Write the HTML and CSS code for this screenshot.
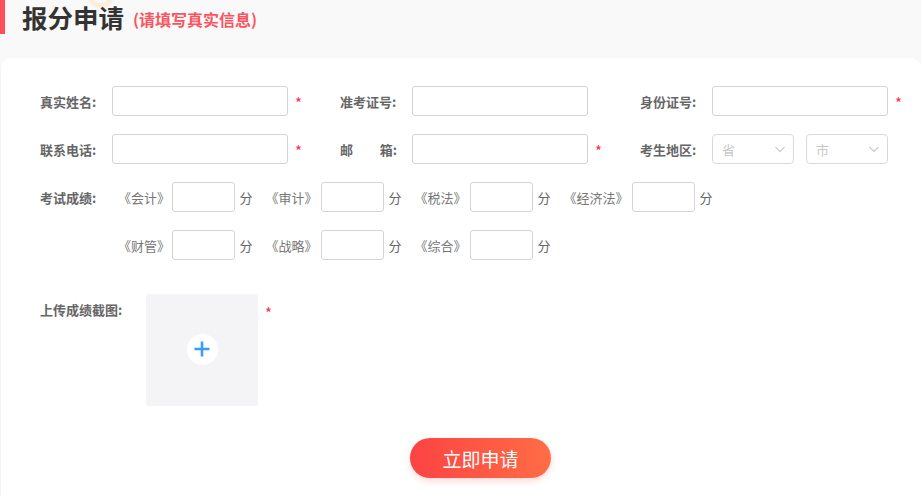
FILE: index.html
```html
<!DOCTYPE html>
<html lang="zh-CN">

<head>
  <meta charset="UTF-8">
  <meta name="viewport" content="width=device-width, initial-scale=1.0">
  <title>报分申请</title>

  <link rel="stylesheet" href="styles.css">
</head>

<body>
  <div class="title">
    <span class="deco"></span>
    <h2>报分申请</h2>
    <span class="tip">(请填写真实信息)</span>
  </div>
  <div class="card">
    <div class="row">
      <div class="field">
        <label>真实姓名:</label>
        <input class="input" type="text">
        <span class="star">*</span>
      </div>
      <div class="field">
        <label>准考证号:</label>
        <input class="input" type="text">
      </div>
      <div class="field">
        <label>身份证号:</label>
        <input class="input" type="text">
        <span class="star">*</span>
      </div>
    </div>
    <div class="row">
      <div class="field">
        <label>联系电话:</label>
        <input class="input" type="text">
        <span class="star">*</span>
      </div>
      <div class="field">
        <label class="spread"><span>邮</span><span>箱:</span></label>
        <input class="input" type="text">
        <span class="star">*</span>
      </div>
      <div class="field">
        <label>考生地区:</label>
        <div class="selects">
          <div class="select">省
            <svg viewBox="0 0 10 7" width="10" height="7"><path d="M.5 1l4.500 4.500L9.500 1" /></svg>
          </div>
          <div class="select">市
            <svg viewBox="0 0 10 7" width="10" height="7"><path d="M.5 1l4.500 4.500L9.500 1" /></svg>
          </div>
        </div>
      </div>
    </div>
    <div class="row scores">
      <label>考试成绩:</label>
      <div class="subject w1">《会计》</div><input class="input score" type="text"><span class="unit">分</span>
      <div class="subject w2">《审计》</div><input class="input score" type="text"><span class="unit">分</span>
      <div class="subject w2">《税法》</div><input class="input score" type="text"><span class="unit">分</span>
      <div class="subject w3">《经济法》</div><input class="input score" type="text"><span class="unit">分</span>
    </div>
    <div class="row scores">
      <label></label>
      <div class="subject w1">《财管》</div><input class="input score" type="text"><span class="unit">分</span>
      <div class="subject w2">《战略》</div><input class="input score" type="text"><span class="unit">分</span>
      <div class="subject w2">《综合》</div><input class="input score" type="text"><span class="unit">分</span>
    </div>
    <div class="upload-row">
      <label>上传成绩截图:</label>
      <div class="upload">
        <span class="plus">
          <svg viewBox="0 0 16 16" width="16" height="16"><path d="M8 .5v15M.5 8h15" /></svg>
        </span>
      </div>
      <span class="star">*</span>
    </div>
    <div class="submit-row">
      <button class="submit">立即申请</button>
    </div>
  </div>
</body>

</html>
```

FILE: styles.css
```css
* {
  box-sizing: border-box;
}

html,
body {
  height: 100%;
}

body {
  margin: 0;
  overflow: hidden;
  background-color: #f9f9f9;
  color: #666;
  font-family: "Noto Sans CJK SC", "Liberation Sans", sans-serif;
  font-size: 13px;
}

.title {
  position: relative;
  display: flex;
  align-items: center;
  height: 34px;
  border-left: 5px solid #ff4d5b;
  padding-left: 17px;
}

/* faint arc peeking out behind the heading */
.title .deco {
  position: absolute;
  top: -8px;
  left: 83px;
  width: 26px;
  height: 16px;
  border: 5px solid #fdeedd;
  border-top: none;
  border-radius: 0 0 12px 12px;
}

.title h2 {
  position: relative;
  margin: 0;
  color: #333;
  font-size: 25.5px;
  font-weight: 700;
  line-height: 34px;
}

.title .tip {
  margin: 4px 0 0 9px;
  color: #fb5460;
  font-size: 16px;
  font-weight: 700;
}

.card {
  height: 437px;
  margin-top: 24px;
  padding: 28px 0 0 39px;
  border-left: 1px solid #f4f4f4;
  border-radius: 10px 10px 0 0;
  background-color: #fff;
}

.row {
  display: flex;
  align-items: center;
  height: 30px;
  margin-bottom: 18px;
}

.field {
  display: flex;
  flex: none;
  align-items: center;
  width: 300px;
}

label {
  flex: none;
  width: 72px;
  color: #666;
  font-weight: 700;
}

label.spread {
  display: flex;
  justify-content: space-between;
  width: 57px;
  margin-right: 15px;
}

.input {
  width: 176px;
  height: 30px;
  padding: 0 8px;
  border: 1px solid #d4d4d4;
  border-radius: 3px;
  outline: none;
  background-color: #fff;
}

.star {
  margin-left: 7px;
  color: #ff2d4a;
  font-size: 15px;
  line-height: 14px;
  padding-top: 4px;
}

.selects {
  display: flex;
  justify-content: space-between;
  width: 176px;
}

.select {
  display: flex;
  align-items: center;
  justify-content: space-between;
  width: 82px;
  height: 30px;
  padding: 0 8px 0 9px;
  border: 1px solid #d9d9d9;
  border-radius: 4px;
  color: #c9c9c9;
}

.select svg {
  fill: none;
  stroke: #d0d0d0;
  stroke-width: 1.4;
}

.subject {
  flex: none;
  width: 55.5px;
  font-size: 13px;
  color: #777;
}

.subject.w1 {
  width: 60px;
  padding-left: 6px;
}

.subject.w3 {
  width: 68.5px;
}

.input.score {
  flex: none;
  width: 62.5px;
}

.unit {
  flex: none;
  width: 31px;
  padding-left: 5px;
  font-size: 13px;
  color: #666;
}

.upload-row {
  display: flex;
  align-items: flex-start;
  margin-top: 34px;
}

.upload-row label {
  width: 106px;
  padding-top: 6px;
}

.upload {
  display: flex;
  align-items: center;
  justify-content: center;
  width: 112px;
  height: 112px;
  padding-bottom: 2px;
  border-radius: 3px;
  background-color: #f4f4f6;
}

.upload-row .star {
  padding-top: 12px;
}

.plus {
  display: flex;
  align-items: center;
  justify-content: center;
  width: 31px;
  height: 31px;
  border-radius: 50%;
  background-color: #fff;
}

.plus svg {
  fill: none;
  stroke: #3c9cf5;
  stroke-width: 2.6;
}

.submit-row {
  display: flex;
  margin: 32px 0 0 370px;
}

.submit {
  width: 141px;
  height: 40px;
  border: none;
  border-radius: 20px;
  outline: none;
  background: linear-gradient(90deg, #fc4343, #ff6d45);
  box-shadow: 0 3px 6px rgba(252, 80, 70, .22);
  color: #fff;
  font-family: inherit;
  font-size: 19px;
  cursor: pointer;
}
```
